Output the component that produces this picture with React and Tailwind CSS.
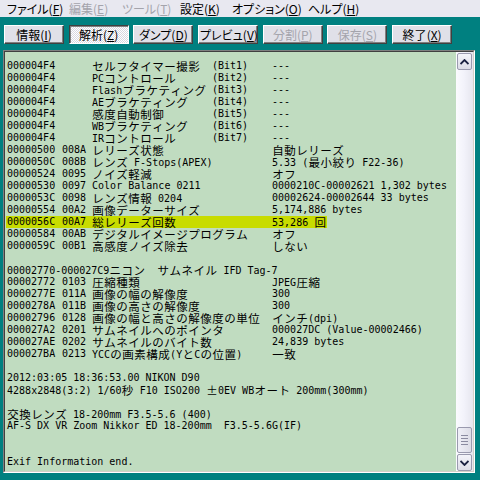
import React from 'react';
import clsx from 'clsx';

// 全角文字は 12px 幅のセルに、半角は DejaVu Sans Mono 10px (約6px) で並べる
const jp = (s) =>
    Array.from(s).map((c, i) =>
        /[^\x00-\x7f]/.test(c) ? (
            <span key={i} className="relative top-[1px] inline-block w-[12px] text-center font-['Noto_Sans_CJK_JP',sans-serif] text-[11.5px] leading-[11px]">
                {c}
            </span>
        ) : (
            c
        )
    );

const bitRows = [
    ['セルフタイマー撮影', '(Bit1)'],
    ['PCコントロール', '(Bit2)'],
    ['Flashブラケティング', '(Bit3)'],
    ['AEブラケティング', '(Bit4)'],
    ['感度自動制御', '(Bit5)'],
    ['WBブラケティング', '(Bit6)'],
    ['IRコントロール', '(Bit7)'],
];

const tagRows1 = [
    ['00000500', '008A', 'レリーズ状態', '自動レリーズ'],
    ['0000050C', '008B', 'レンズ F-Stops(APEX)', '5.33 (最小絞り F22-36)'],
    ['00000524', '0095', 'ノイズ軽減', 'オフ'],
    ['00000530', '0097', 'Color Balance 0211', '0000210C-00002621 1,302 bytes'],
    ['0000053C', '0098', 'レンズ情報 0204', '00002624-00002644 33 bytes'],
    ['00000554', '00A2', '画像データーサイズ', '5,174,886 bytes'],
    ['0000056C', '00A7', '総レリーズ回数', '53,286 回', true],
    ['00000584', '00AB', 'デジタルイメージプログラム', 'オフ'],
    ['0000059C', '00B1', '高感度ノイズ除去', 'しない'],
];

const tagRows2 = [
    ['00002772', '0103', '圧縮種類', 'JPEG圧縮'],
    ['0000277E', '011A', '画像の幅の解像度', '300'],
    ['0000278A', '011B', '画像の高さの解像度', '300'],
    ['00002796', '0128', '画像の幅と高さの解像度の単位', 'インチ(dpi)'],
    ['000027A2', '0201', 'サムネイルへのポインタ', '000027DC (Value-00002466)'],
    ['000027AE', '0202', 'サムネイルのバイト数', '24,839 bytes'],
    ['000027BA', '0213', 'YCCの画素構成(YとCの位置)', '一致'],
];

const Line = ({ children }) => <div className="h-[12px] leading-[12px] whitespace-pre">{children}</div>;

const TagRow = ({ a, t, n, v, hl }) => (
    <div className={clsx('flex h-[12px] leading-[12px] whitespace-pre', hl && 'w-fit -ml-[1px] pl-[1px] pr-[1px] bg-[#c8dc00]')}>
        <span className="w-[55px] shrink-0">{a}</span>
        <span className="w-[30px] shrink-0">{t}</span>
        <span className="w-[180px] shrink-0">{jp(n)}</span>
        <span>{jp(v)}</span>
    </div>
);

const Mn = ({ children }) => <span className="underline underline-offset-[1px]">{children}</span>;

const menus = [
    { label: 'ファイル', key: 'F', w: 'w-[62px]' },
    { label: '編集', key: 'E', w: 'w-[53px]', off: true },
    { label: 'ツール', key: 'T', w: 'w-[58px]', off: true },
    { label: '設定', key: 'K', w: 'w-[52px]' },
    { label: 'オプション', key: 'O', w: 'w-[76px]' },
    { label: 'ヘルプ', key: 'H', w: 'w-[60px]' },
];

const buttons = [
    { label: '情報', key: 'I' },
    { label: '解析', key: 'Z', pressed: true },
    { label: 'ダンプ', key: 'D' },
    { label: 'プレビュ', key: 'V', clip: true },
    { label: '分割', key: 'P', off: true },
    { label: '保存', key: 'S', off: true },
    { label: '終了', key: 'X' },
];

const Chevron = ({ down }) => (
    <svg width="9" height="6" viewBox="0 0 9 6" className={down ? 'rotate-180' : ''}>
        <path d="M0.5 5 L4.5 1 L8.5 5" fill="none" stroke="#1a2040" strokeWidth="1.8" />
    </svg>
);

const ScrollBtn = ({ down }) => (
    <div className="h-[17px] mx-[1px] flex items-center justify-center bg-gradient-to-b from-[#f4f4fa] to-[#dcdce6] border border-[#9a9aae] rounded-[2px]">
        <Chevron down={down} />
    </div>
);

export default function App() {
    return (
        <div className="w-[480px] h-[480px] overflow-hidden bg-[#008080] text-black text-[12px] font-['Noto_Sans_CJK_JP',sans-serif] [font-feature-settings:'palt']">
            {/* メニューバー */}
            <div className="h-[17px] bg-[#e8e8f0] flex items-center pl-[7px] leading-none">
                {menus.map((m) => (
                    <div key={m.key} className={clsx(m.w, 'shrink-0 whitespace-nowrap', m.off ? 'text-[#a4a4ac]' : 'text-black')}>
                        {m.label}(<Mn>{m.key}</Mn>)
                    </div>
                ))}
            </div>

            {/* ツールバー */}
            <div className="mt-[8px] h-[19px] flex pl-[4px] gap-[4.7px]">
                {buttons.map((b) => (
                    <div
                        key={b.key}
                        className={clsx(
                            'w-[60px] h-[19px] shrink-0 flex items-center overflow-hidden whitespace-nowrap leading-none border',
                            b.clip ? 'justify-start pl-[1px]' : 'justify-center',
                            b.pressed
                                ? 'border-t-[#404040] border-l-[#404040] border-r-white border-b-white shadow-[inset_1px_1px_0_#808080] bg-[repeating-conic-gradient(#ffffff_0_25%,#d8d8e0_0_50%)] bg-[length:2px_2px]'
                                : 'border-t-white border-l-white border-r-[#404040] border-b-[#404040] shadow-[inset_-1px_-1px_0_#808080] bg-[#e0e0e8]',
                            b.off ? 'text-[#a4a4ac]' : 'text-black'
                        )}
                    >
                        {b.label}(<Mn>{b.key}</Mn>)
                    </div>
                ))}
            </div>

            {/* 解析結果パネル */}
            <div className="mt-[6px] ml-[3px] w-[472px] h-[423px] border border-t-[#808080] border-l-[#808080] border-r-white border-b-white">
                <div className="h-full flex border border-t-[#404040] border-l-[#404040] border-r-[#d4d0c8] border-b-[#d4d0c8] bg-[#c0dcc0]">
                    <div className="flex-1 overflow-hidden pt-[8px] pl-[2px] text-[10px] font-['DejaVu_Sans_Mono','Noto_Sans_CJK_JP',monospace] [font-feature-settings:normal]">
                        {bitRows.map(([n, b]) => (
                            <div key={b} className="flex h-[12px] leading-[12px] whitespace-pre">
                                <span className="w-[85px] shrink-0">000004F4</span>
                                <span className="w-[120px] shrink-0">{jp(n)}</span>
                                <span className="w-[60px] shrink-0">{b}</span>
                                <span>---</span>
                            </div>
                        ))}
                        {tagRows1.map(([a, t, n, v, hl]) => (
                            <TagRow key={a} a={a} t={t} n={n} v={v} hl={hl} />
                        ))}
                        <Line> </Line>
                        <Line>
                            00002770-000027C9{jp('ニコン　サムネイル')} IFD Tag-7
                        </Line>
                        {tagRows2.map(([a, t, n, v]) => (
                            <TagRow key={a} a={a} t={t} n={n} v={v} />
                        ))}
                        <Line> </Line>
                        <Line>2012:03:05 18:36:53.00 NIKON D90</Line>
                        <Line>{jp('4288x2848(3:2) 1/60秒 F10 ISO200 ±0EV WBオート 200mm(300mm)')}</Line>
                        <Line> </Line>
                        <Line>{jp('交換レンズ 18-200mm F3.5-5.6 (400)')}</Line>
                        <Line>AF-S DX VR Zoom Nikkor ED 18-200mm  F3.5-5.6G(IF)</Line>
                        <Line> </Line>
                        <Line> </Line>
                        <Line>Exif Information end.</Line>
                    </div>

                    {/* スクロールバー */}
                    <div className="w-[17px] shrink-0 flex flex-col pt-[1px] bg-gradient-to-r from-[#fbfbff] via-[#f2f2fa] to-[#e6e6ee]">
                        <ScrollBtn />
                        <div className="flex-1" />
                        <div className="h-[26px] mx-[1px] mb-[1px] flex flex-col items-center justify-center gap-[2px] bg-gradient-to-r from-[#f0f0f8] to-[#dcdce6] border border-[#9a9aae] rounded-[2px]">
                            <div className="w-[7px] h-[1px] bg-[#8a8aa0]" />
                            <div className="w-[7px] h-[1px] bg-[#8a8aa0]" />
                            <div className="w-[7px] h-[1px] bg-[#8a8aa0]" />
                            <div className="w-[7px] h-[1px] bg-[#8a8aa0]" />
                        </div>
                        <ScrollBtn down />
                    </div>
                </div>
            </div>
        </div>
    );
}
